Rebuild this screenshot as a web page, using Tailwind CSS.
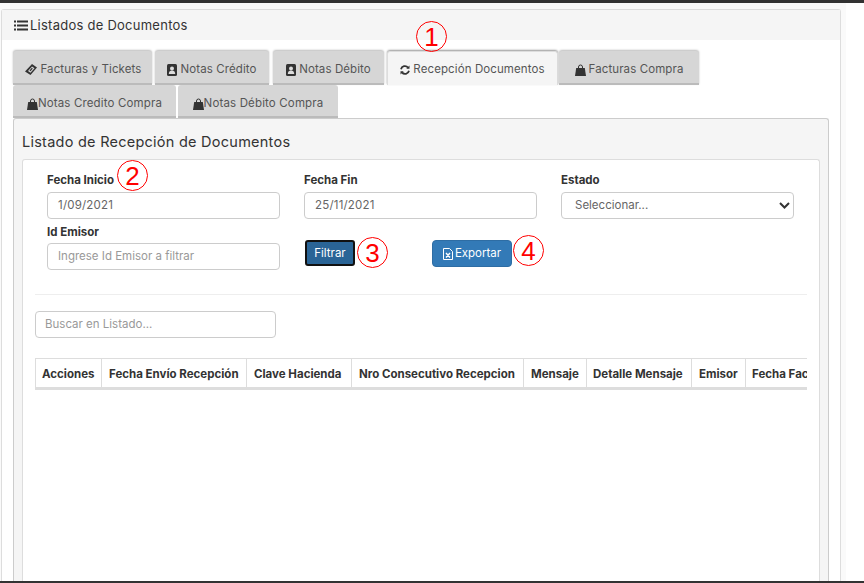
<!DOCTYPE html>
<html lang="es"><head><meta charset="utf-8"><title>Listados de Documentos</title>
<script src="https://cdn.jsdelivr.net/npm/@tailwindcss/browser@4"></script></head>
<body class="bg-white">
<div class="relative h-[583px] w-[864px] overflow-hidden bg-white font-['Inter','Liberation_Sans',sans-serif] text-[#333]">
  <div class="h-[3px] bg-[#333]"></div>
  <div class="h-[578px] w-[846px] overflow-hidden bg-[#fafafa] pt-[6px]">
    <div class="ml-[1px] h-full w-[840px] rounded-t-[3px] border border-b-0 border-[#ddd] bg-white">
      <div class="flex h-[30px] items-center gap-[2px] bg-[#f5f5f5] pl-[12px] text-[13px] leading-none tracking-[0.25px]">
        <svg class="h-[13px] w-[14px]" viewBox="0 0 14 12" fill="#333"><path d="M0 1h2v2H0zM3 1h11v2H3zM0 5h2v2H0zM3 5h11v2H3zM0 9h2v2H0zM3 9h11v2H3z"/></svg>
        <span>Listados de Documentos</span>
      </div>
      <div class="px-[11px] pt-[11px]">
        <div class="flex h-[34px] text-[11.5px] tracking-[0.1px] text-[#555]">
          <div class="flex w-[139px] items-center justify-center gap-[4px] rounded-t-[3px] border-b-2 border-[#bbb] bg-[#d6d6d6] pl-[1px] pt-[5px] shadow-[0_-1px_2px_#bbb]">
            <svg class="h-[11px] w-[12px]" viewBox="0 0 12 11" fill="#333"><path d="M7 0l5 3.500-6.500 7.500L0 7.500zM7 2.500L3 7l2.500 1.700 4-4.500z" fill-rule="evenodd"/><path d="M6.800 3.800L4.500 6.500l1 .7 2.300-2.700z"/></svg><span>Facturas y Tickets</span></div>
          <div class="ml-[3px] flex w-[114px] items-center justify-center gap-[3px] rounded-t-[3px] border-b-2 border-[#bbb] bg-[#d6d6d6] pt-[5px] shadow-[0_-1px_2px_#bbb]">
            <svg class="h-[12px] w-[10px]" viewBox="0 0 10 12"><rect width="10" height="12" rx="1.500" fill="#333"/><circle cx="5" cy="4.500" r="2" fill="#ddd"/><path d="M1.800 10c0-2.500 1.300-3.500 3.200-3.500s3.200 1 3.200 3.500z" fill="#ddd"/></svg><span>Notas Crédito</span></div>
          <div class="ml-[4px] flex w-[111px] items-center justify-center gap-[3px] rounded-t-[3px] border-b-2 border-[#bbb] bg-[#d6d6d6] pt-[5px] shadow-[0_-1px_2px_#bbb]">
            <svg class="h-[12px] w-[10px]" viewBox="0 0 10 12"><rect width="10" height="12" rx="1.500" fill="#333"/><circle cx="5" cy="4.500" r="2" fill="#ddd"/><path d="M1.800 10c0-2.500 1.300-3.500 3.200-3.500s3.200 1 3.200 3.500z" fill="#ddd"/></svg><span>Notas Débito</span></div>
          <div class="ml-[3px] flex w-[171px] items-center justify-center gap-[3px] rounded-t-[3px] border-x border-t border-[#ddd] bg-[#f5f5f5] pt-[3px] shadow-[0_-1px_2px_#999]">
            <svg class="h-[10px] w-[10px]" viewBox="0 0 10 10" fill="none" stroke="#333" stroke-width="1.800"><path d="M1 4.200A4 4 0 0 1 8 2.600M9 5.800A4 4 0 0 1 2 7.400"/><path d="M9.500.5v3.200H6.300zM.5 9.500V6.300h3.200z" fill="#333" stroke="none"/></svg><span>Recepción Documentos</span></div>
          <div class="ml-[1px] flex w-[140px] items-center justify-center gap-[3px] rounded-t-[3px] border-b-2 border-[#bbb] bg-[#d6d6d6] pt-[5px] shadow-[0_-1px_2px_#bbb]">
            <svg class="h-[12px] w-[11px]" viewBox="0 0 11 12"><path d="M3.500 5V3a2 2 0 0 1 4 0v2" fill="none" stroke="#333"/><path d="M1.200 4h8.600l1.200 8H0z" fill="#333"/></svg><span>Facturas Compra</span></div>
        </div>
        <div class="flex h-[33px] text-[11.5px] tracking-[0.15px] text-[#555]">
          <div class="flex w-[163px] items-center justify-center rounded-t-[3px] border-b-2 border-[#bbb] bg-[#d6d6d6] pt-[7px]">
            <svg class="h-[12px] w-[11px]" viewBox="0 0 11 12"><path d="M3.500 5V3a2 2 0 0 1 4 0v2" fill="none" stroke="#333"/><path d="M1.200 4h8.600l1.200 8H0z" fill="#333"/></svg><span>Notas Credito Compra</span></div>
          <div class="ml-[2px] flex w-[160px] items-center justify-center rounded-t-[3px] border-b-2 border-[#bbb] bg-[#d6d6d6] pt-[7px]">
            <svg class="h-[12px] w-[11px]" viewBox="0 0 11 12"><path d="M3.500 5V3a2 2 0 0 1 4 0v2" fill="none" stroke="#333"/><path d="M1.200 4h8.600l1.200 8H0z" fill="#333"/></svg><span>Notas Débito Compra</span></div>
        </div>
        <div class="h-[470px] rounded-t-[3px] border border-b-0 border-[#ccc] bg-[#f5f5f5] px-[8px] pt-[14px]">
          <h2 class="h-[26px] text-[14.5px] leading-[18px] tracking-[0.25px]">Listado de Recepción de Documentos</h2>
          <div class="h-[430px] rounded-t-[3px] border border-b-0 border-[#ddd] bg-white px-[12px]">
            <div class="grid grid-cols-[233px_233px_233px] gap-x-[24px] pl-[12px] pt-[12px] text-[11.5px]">
              <div>
                <label class="block h-[20px] font-bold leading-[16px]">Fecha Inicio</label>
                <div class="flex h-[27px] items-center rounded-[4px] border border-[#ccc] px-[10px] tracking-[0.2px] text-[#666]">1/09/2021</div>
              </div>
              <div>
                <label class="block h-[20px] font-bold leading-[16px]">Fecha Fin</label>
                <div class="flex h-[27px] items-center rounded-[4px] border border-[#ccc] px-[10px] tracking-[0.2px] text-[#666]">25/11/2021</div>
              </div>
              <div>
                <label class="block h-[20px] font-bold leading-[16px]">Estado</label>
                <div class="flex h-[27px] items-center justify-between rounded-[4px] border border-[#ccc] pl-[13px] pr-[3px] text-[#666]">
                  <span>Seleccionar...</span>
                  <svg class="h-[7px] w-[11px]" viewBox="0 0 11 7" fill="none" stroke="#333" stroke-width="2"><path d="M1 1l4.500 4.500L10 1"/></svg>
                </div>
              </div>
              <div class="pt-[5px]">
                <label class="block h-[19px] font-bold leading-[16px]">Id Emisor</label>
                <div class="flex h-[27px] items-center rounded-[4px] border border-[#ccc] px-[10px] text-[#999]">Ingrese Id Emisor a filtrar</div>
              </div>
              <div class="col-span-2 flex items-start pt-[21px]">
                <button class="ml-[1px] flex h-[26px] w-[50px] items-center justify-center rounded-[3px] border-2 border-[#111] bg-[#2a6496] pt-[1px] text-white">Filtrar</button>
                <button class="ml-[77px] flex h-[27px] w-[80px] items-center justify-center gap-[2px] rounded-[4px] border border-[#2e6da4] bg-[#337ab7] text-white">
                  <svg class="h-[12px] w-[10px]" viewBox="0 0 10 12" fill="none" stroke="#fff"><path d="M.5.500h6l3 3v8h-9z"/><path d="M3 5l4 4.500M7 5L3 9.500" stroke-width="1.400"/></svg><span>Exportar</span></button>
              </div>
            </div>
            <div class="mt-[24px] h-px bg-[#eee]"></div>
            <div class="mt-[16px] flex h-[27px] w-[241px] items-center rounded-[4px] border border-[#ccc] px-[9px] text-[11.5px] text-[#999]">Buscar en Listado...</div>
            <div class="mt-[20px] w-[772px] overflow-hidden">
              <div class="flex h-[32px] w-[820px] border-x border-b-[3px] border-t border-[#ddd] text-[11.5px] font-bold leading-[30px]">
                <div class="w-[66px] shrink-0 border-r border-[#ddd] pl-[6px]">Acciones</div>
                <div class="w-[145px] shrink-0 border-r border-[#ddd] pl-[7px]">Fecha Envío Recepción</div>
                <div class="w-[105px] shrink-0 border-r border-[#ddd] pl-[7px]">Clave Hacienda</div>
                <div class="w-[172px] shrink-0 border-r border-[#ddd] pl-[7px]">Nro Consecutivo Recepcion</div>
                <div class="w-[63px] shrink-0 border-r border-[#ddd] pl-[7px]">Mensaje</div>
                <div class="w-[105px] shrink-0 border-r border-[#ddd] pl-[6px]">Detalle Mensaje</div>
                <div class="w-[54px] shrink-0 border-r border-[#ddd] pl-[7px]">Emisor</div>
                <div class="shrink-0 whitespace-nowrap pl-[6px]">Fecha Factura</div>
              </div>
            </div>
          </div>
        </div>
      </div>
    </div>
  </div>
  <div class="h-[2px] bg-[#333]"></div>
  <div class="absolute left-[416px] top-[21px] flex h-[31px] w-[31px] items-center justify-center rounded-full border-[1.5px] border-[#f00] font-['Liberation_Sans'] text-[26px] leading-none text-[#f00]">1</div>
  <div class="absolute left-[117px] top-[160px] flex h-[31px] w-[31px] items-center justify-center rounded-full border-[1.5px] border-[#f00] font-['Liberation_Sans'] text-[26px] leading-none text-[#f00]">2</div>
  <div class="absolute left-[357px] top-[237px] flex h-[31px] w-[31px] items-center justify-center rounded-full border-[1.5px] border-[#f00] font-['Liberation_Sans'] text-[26px] leading-none text-[#f00]">3</div>
  <div class="absolute left-[513px] top-[235px] flex h-[31px] w-[31px] items-center justify-center rounded-full border-[1.5px] border-[#f00] font-['Liberation_Sans'] text-[26px] leading-none text-[#f00]">4</div>
</div>
</body></html>
